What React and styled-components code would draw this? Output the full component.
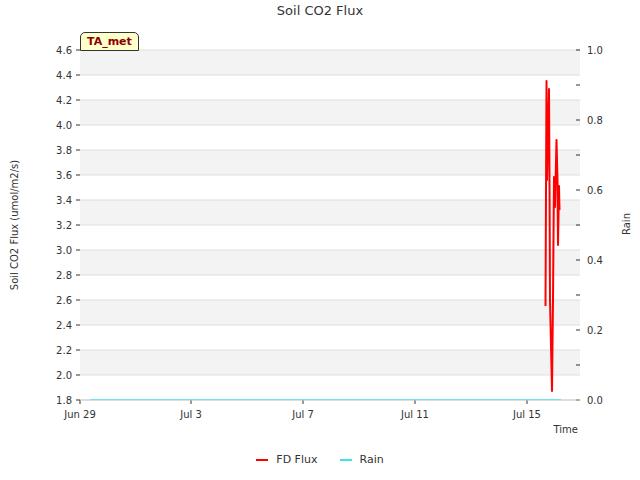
import React from "react";
import styled, { createGlobalStyle } from "styled-components";

const Global = createGlobalStyle`
  html, body { margin: 0; padding: 0; background: #fff; }
  body { font-family: "DejaVu Sans", sans-serif; }
`;

const Page = styled.div`
  width: 640px; height: 480px; position: relative; overflow: hidden;
  display: flex; flex-direction: column; align-items: center;
`;
const Title = styled.div`
  font-size: 13px; color: #333; margin-top: 3px; height: 20px;
`;
const ChartSvg = styled.svg`
  display: block; width: 640px; height: 425px;
`;
const Legend = styled.div`
  display: flex; gap: 22px; font-size: 11px; color: #333; margin-top: 5px;
`;
const LegendItem = styled.div`
  display: flex; align-items: center; gap: 8px;
`;
const Swatch = styled.span`
  width: 12px; height: 2px; background: ${p => p.$c};
`;
const Badge = styled.div`
  position: absolute; left: 80px; top: 32px;
  background: #ffffcc; border: 1px solid #333; color: #8b0000;
  border-radius: 5px 5px 0 0;
  font-weight: bold; font-size: 11px; padding: 2px 6px 2px;
`;

const OFF = 23;
const X0 = 80, X1 = 580, Y0 = 50 - OFF, Y1 = 400 - OFF;
const yv = v => Y1 - ((v - 1.8) / 2.8) * 350;
const leftTicks = Array.from({ length: 15 }, (_, i) => 1.8 + i * 0.2);
const xt = [["Jun 29", 80], ["Jul 3", 191], ["Jul 7", 303], ["Jul 11", 415], ["Jul 15", 527]];
const redPts = [[545.5,306],[546.5,81],[547,180],[549,89],[549.5,180],[550,300],[552,391],[553,300],[554,177],[555,207],[556.5,140],[557.5,180],[558,245],[559,186],[559.5,210]]
  .map(([x, y]) => `${x},${y - OFF}`).join(" ");

export default function App() {
  return (
    <Page>
      <Global />
      <Title>Soil CO2 Flux</Title>
      <ChartSvg viewBox="0 0 640 425">
        {Array.from({ length: 7 }, (_, i) => (
          <rect key={i} x={X0} y={Y0 + i * 50} width={500} height={25} fill="#f3f3f3" />
        ))}
        {leftTicks.map((v, i) => (
          <g key={i}>
            <line x1={X0} x2={X1} y1={yv(v)} y2={yv(v)} stroke="#dedede" />
            <line x1={X0 - 4} x2={X0} y1={yv(v)} y2={yv(v)} stroke="#333" />
            <text x={X0 - 8} y={yv(v) + 4} fontSize="10" textAnchor="end" fill="#333">{v.toFixed(1)}</text>
          </g>
        ))}
        {Array.from({ length: 11 }, (_, i) => {
          const y = Y1 - i * 35;
          return (
            <g key={i}>
              <line x1={X1 - 4} x2={X1} y1={y} y2={y} stroke="#333" />
              {i % 2 === 0 && <text x={587} y={y + 4} fontSize="10" fill="#333">{(i / 10).toFixed(1)}</text>}
            </g>
          );
        })}
        {xt.map(([t, x]) => (
          <g key={t}>
            <line x1={x} x2={x} y1={Y1} y2={Y1 + 4} stroke="#333" />
            <text x={x} y={Y1 + 18} fontSize="10" textAnchor="middle" fill="#333">{t}</text>
          </g>
        ))}
        <line x1={X0} x2={X1} y1={Y1} y2={Y1} stroke="#ccc" />
        <line x1={90} x2={561} y1={Y1 - 0.5} y2={Y1 - 0.5} stroke="#6fe3ee" strokeWidth="1" />
        <polyline points={redPts} fill="none" stroke="#ff0000" strokeWidth="2" strokeLinejoin="round" />
        <text x={578} y={Y1 + 33} fontSize="10" textAnchor="end" fill="#333">Time</text>
        <text transform={`translate(18,${225 - OFF}) rotate(-90)`} fontSize="10" textAnchor="middle" fill="#333">Soil CO2 Flux (umol/m2/s)</text>
        <text transform={`translate(630,${224 - OFF}) rotate(-90)`} fontSize="10" textAnchor="middle" fill="#333">Rain</text>
      </ChartSvg>
      <Legend>
        <LegendItem><Swatch $c="#ff0000" />FD Flux</LegendItem>
        <LegendItem><Swatch $c="#40e0e8" />Rain</LegendItem>
      </Legend>
      <Badge>TA_met</Badge>
    </Page>
  );
}
